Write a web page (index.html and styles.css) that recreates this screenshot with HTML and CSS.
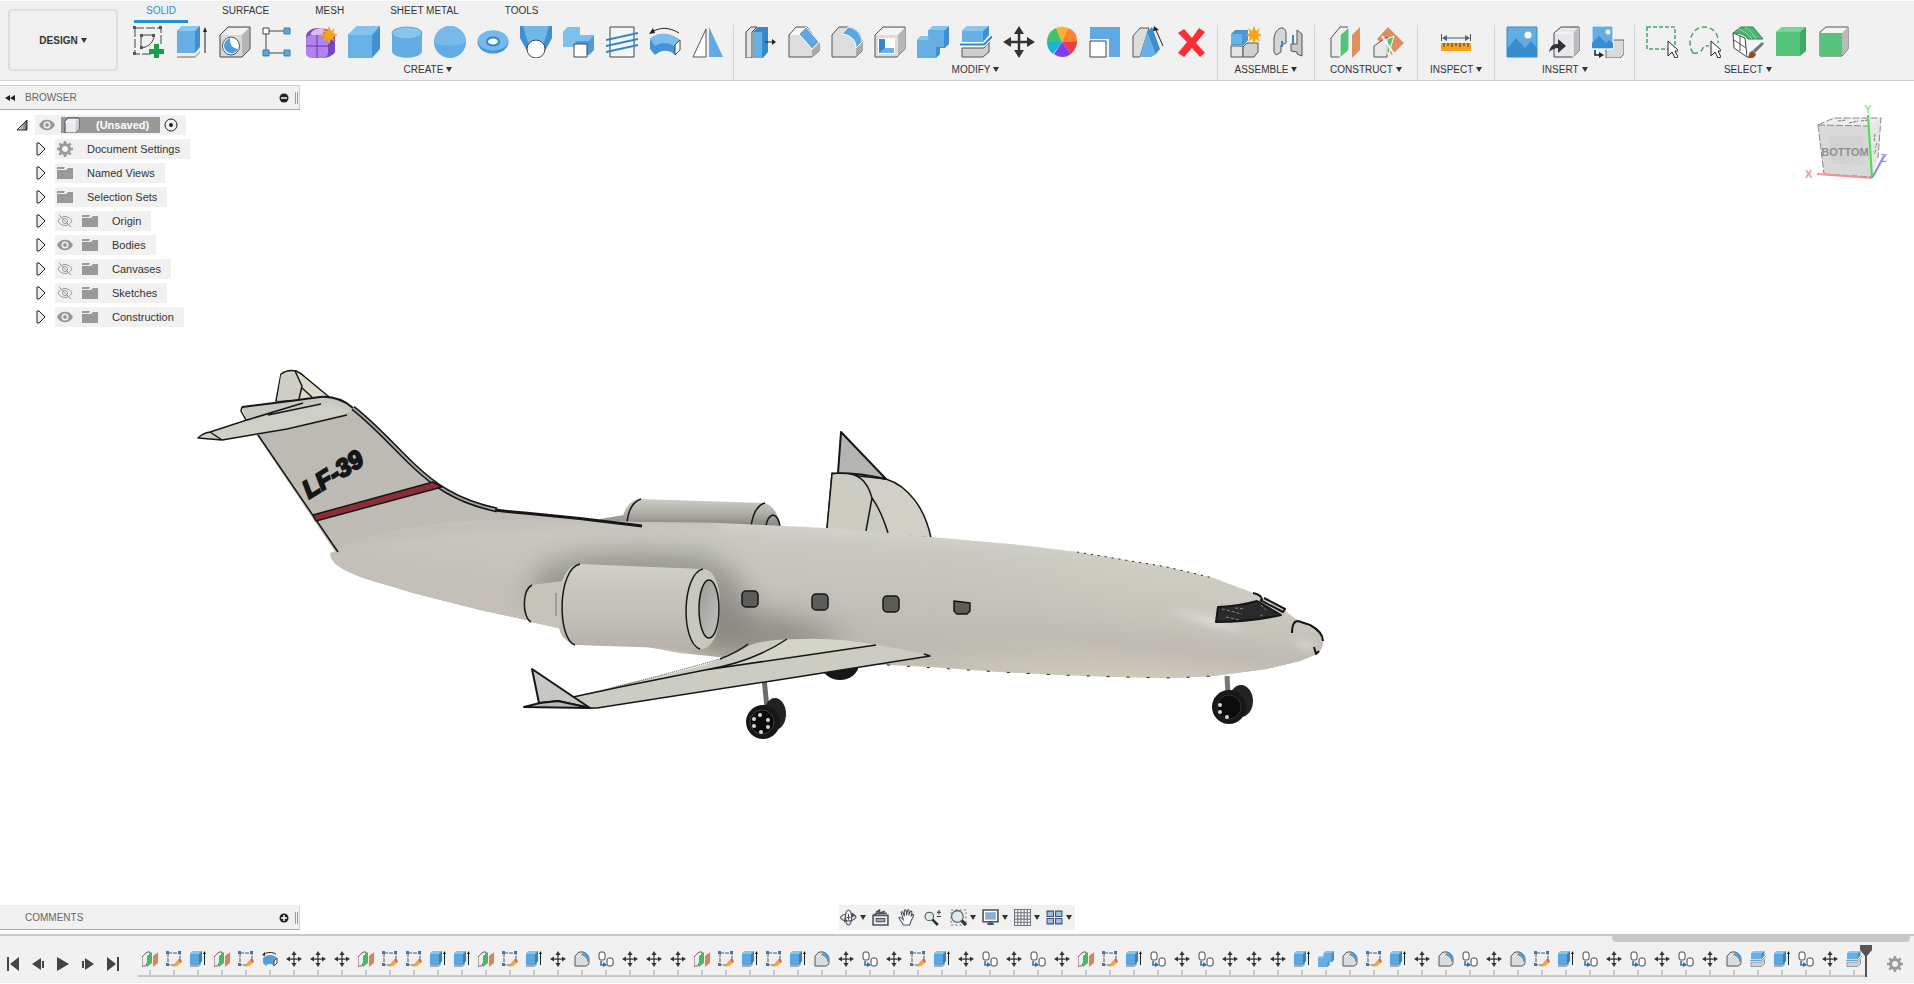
FILE: index.html
```html
<!DOCTYPE html>
<html lang="en">
<head>
<meta charset="UTF-8">
<meta name="viewport" content="width=device-width, initial-scale=1.0">
<title>Unsaved - Design</title>
<link rel="stylesheet" href="styles.css">
</head>
<body>
<!-- Icon sprite -->
<svg class="sprite" aria-hidden="true">
    <defs>
        <linearGradient id="caret-face" x1="0" y1="0" x2="1" y2="0"><stop offset="0" stop-color="#fff"/><stop offset="1" stop-color="#666"/></linearGradient>
    </defs>
    <!-- create -->
    <symbol id="i-sketch" viewBox="0 0 32 32"><path d="M2 2h26v17M2 2v26h16" fill="none" stroke="#444" stroke-dasharray="9 2"/><path d="M8 9h13M8 9v13M21 9c0 7-5 12-13 13" fill="none" stroke="#444"/><path d="M0 0h3v3H0zM26 0h3v3h-3zM0 26h3v3H0zM7 8h3v3H7zM19 8h3v3h-3zM7 20h3v3H7z" fill="#555"/><path d="M21 18h5v5h5v5h-5v5h-5v-5h-5v-5h5z" fill="#1d9d50"/></symbol>
    <symbol id="i-extrude" viewBox="0 0 32 32"><path d="M1 28l5-3h18v2l-5 5H1z" fill="#bba99c"/><path d="M1 26h18l5-4v3l-5 5H1z" fill="#eee"/><path d="M1 5l5-5h18v21l-5 6H1z" fill="#3f90d0"/><path d="M1 5h18v22H1z" fill="#67b0e6"/><path d="M1 5l5-5h18l-5 5z" fill="#8dc6ef"/><path d="M29 27V4" stroke="#222"/><path d="M27 6l2-5 2 5z" fill="#222"/></symbol>
    <symbol id="i-hole" viewBox="0 0 32 32"><path d="M1 9l8-8h22v22l-8 8H1z" fill="#d9d9d9" stroke="#444"/><path d="M2 9l8-7h20l-7 7z" fill="#f2f2f2"/><path d="M23 9l7-7v21l-7 7z" fill="#b5b5b5"/><ellipse cx="12" cy="20" rx="8.500" ry="9" fill="#fff" stroke="#555"/><path d="M11 12c0 7 2 10 8 11-2 6-13 6-14-3 0-4 3-7 6-8z" fill="#4c9edb"/></symbol>
    <symbol id="i-pattern" viewBox="0 0 32 32"><path d="M7 5h16M4 8v17M7 27h16" stroke="#444" fill="none"/><path d="M1 2h6v6H1z" fill="#fff" stroke="#444"/><path d="M22 2h6v6h-6zM1 24h6v6H1zM22 24h6v6h-6z" fill="#5aa8e2" stroke="#3d7cab"/></symbol>
    <symbol id="i-form" viewBox="0 0 32 32"><path d="M1 11c0-5 5-9 12-9s17 3 17 9v15c-3 5-9 6-15 6S1 32 1 26z" fill="#7647c4"/><path d="M1 13c0-4 4-4 11-4s11 0 11 4v13c0 6-4 6-11 6S1 32 1 26z" fill="#b283ec"/><path d="M5 8c4-6 10-6 15-6l-2 7H7z" fill="#d9bcf6"/><path d="M12 9v23M1 20h22c4-2 7-4 7-6" stroke="#633aa8" fill="none"/><path d="M24 0l2 5 4-3-2 5 5 2-5 2 2 5-4-3-2 6-2-6-5 3 3-5-6-2 6-2-3-5 5 3z" fill="#f5a417"/></symbol>
    <symbol id="i-box" viewBox="0 0 32 32"><path d="M0 9l9-9h23v23l-8 9H0z" fill="#4292d3"/><path d="M0 9h24v23H0z" fill="#67b1e7"/><path d="M0 9l9-9h23l-8 9z" fill="#86c2ee"/></symbol>
    <symbol id="i-cylinder" viewBox="0 0 32 32"><path d="M1 7v18c0 9 30 9 30 0V7z" fill="#63ade4"/><ellipse cx="16" cy="7" rx="15" ry="6" fill="#89c4ef" stroke="#5ba5de"/></symbol>
    <symbol id="i-sphere" viewBox="0 0 32 32"><circle cx="16" cy="16" r="16" fill="#60ace5"/><path d="M0 16a16 16 0 0132 0c-5 5-27 5-32 0z" fill="#78b9ea"/></symbol>
    <symbol id="i-torus" viewBox="0 0 32 32"><ellipse cx="16" cy="16" rx="15.500" ry="11.500" fill="#4898d7"/><ellipse cx="16" cy="14.500" rx="15" ry="10" fill="#77b9eb"/><ellipse cx="16" cy="15.500" rx="6" ry="4" fill="#fff" stroke="#3685c6" stroke-width="2"/></symbol>
    <symbol id="i-loft" viewBox="0 0 32 32"><path d="M0 0h32v12l-7 13H7L0 12z" fill="#3f8fd1"/><path d="M3 0h26l-6 20H9z" fill="#73b8ea"/><ellipse cx="16" cy="23" rx="9" ry="9" fill="#fff" stroke="#444"/></symbol>
    <symbol id="i-pipe" viewBox="0 0 32 32"><path d="M0 6l5-5h12v8h14v15l-5 5H11v-8H0z" fill="#4c9cdb"/><path d="M0 6l5-5h12v8h14l-5 6H13l-2 6H0z" fill="#7fbfed"/><path d="M11 18h13v13H11z" fill="#fff" stroke="#444"/></symbol>
    <symbol id="i-thread" viewBox="0 0 32 32"><path d="M4 1h24v30H4z" fill="#f5f5f5" stroke="#444"/><path d="M0 14l32-7M0 20l32-7M0 26l32-7" stroke="#2c87d2" stroke-width="2"/></symbol>
    <symbol id="i-bend" viewBox="0 0 32 32"><path d="M1 13c8-7 19-7 30 1v10l-5 5c-6-6-14-5-20 0l-5-6z" fill="#4594d4"/><path d="M1 13c8-7 19-7 30 1l-6 6c-6-4-13-4-19 0z" fill="#7dbdec"/><path d="M26 19l5-5v10l-5 5z" fill="#fff" stroke="#444"/><path d="M3 6c8-5 17-5 27 1" fill="none" stroke="#222"/><path d="M0 8l4-6 2 5z" fill="#222"/></symbol>
    <symbol id="i-mirror" viewBox="0 0 32 32"><path d="M1 31L14 3v28z" fill="#fff" stroke="#555"/><path d="M17 1l14 30H17z" fill="#60abe3"/></symbol>
    <!-- modify -->
    <symbol id="i-press" viewBox="0 0 32 32"><path d="M1 6l5-5h6l-5 5v26H1z" fill="#e5e5e5" stroke="#444"/><path d="M8 6l5-5h10v25l-5 6H8z" fill="#3787cb"/><path d="M8 6h9v26H8z" fill="#67b0e6"/><path d="M20 16h9" stroke="#222"/><path d="M27 13l4 3-4 3z" fill="#222"/></symbol>
    <symbol id="i-chamfer" viewBox="0 0 32 32"><path d="M1 9l7-8h11l12 16v8l-7 6H1z" fill="#ddd" stroke="#555"/><path d="M24 24l7-7v8l-7 6z" fill="#aaa"/><path d="M2 9l6-7h10l-7 7z" fill="#f8f8f8"/><path d="M11 8l7-7 13 15-7 7z" fill="#5aa7e1" stroke="#fff"/></symbol>
    <symbol id="i-fillet" viewBox="0 0 32 32"><path d="M1 9l7-8h9c9 1 14 8 14 16v8l-6 6H1z" fill="#ddd" stroke="#555"/><path d="M25 22l6-4v7l-6 6z" fill="#aaa"/><path d="M11 8l6-7c9 1 14 9 14 15l-6 6c0-8-5-13-14-14z" fill="#5aa7e1" stroke="#fff"/></symbol>
    <symbol id="i-shell" viewBox="0 0 32 32"><path d="M1 9l8-8h22v22l-8 8H1z" fill="#ddd" stroke="#555"/><path d="M2 9l8-7h20l-7 7z" fill="#f5f5f5"/><path d="M24 9l7-7v21l-7 7z" fill="#b5b5b5"/><path d="M4 12h17v16H4z" fill="#fff"/><path d="M5 13h6v9h9v5H5z" fill="#69b2e7"/><path d="M5 13h6v9l-6 5z" fill="#3586cb"/></symbol>
    <symbol id="i-combine" viewBox="0 0 32 32"><path d="M0 14l4-4h8V4l4-4h16v18l-4 4h-5v6l-4 4H0z" fill="#3f90d2"/><path d="M0 14h11V4h16v17h-8v11H0z" fill="#65afe5"/><path d="M0 14l4-4h8l-1 4zM12 4l4-4h16l-4 4z" fill="#8bc5ef"/></symbol>
    <symbol id="i-split" viewBox="0 0 32 32"><path d="M2 5l5-5h22v9l-6 7H2z" fill="#3f90d2"/><path d="M2 5l5-5h22l-6 5z" fill="#8dc7f0"/><path d="M2 5h21v11H2z" fill="#66b0e6"/><path d="M2 22h22l5-6v10l-6 5H2z" fill="#cfcfcf" stroke="#555"/><path d="M0 18.500h24l8-8" fill="none" stroke="#fff" stroke-width="4"/><path d="M0 18.500h24l8-8" fill="none" stroke="#2c87d2" stroke-width="2"/></symbol>
    <symbol id="i-move" viewBox="0 0 32 32"><path d="M16 5v22M5 16h22" stroke="#333" stroke-width="2.500"/><path d="M11 8l5-8 5 8zM11 24l5 8 5-8zM8 11l-8 5 8 5zM24 11l8 5-8 5z" fill="#333"/></symbol>
    <symbol id="i-colors" viewBox="0 0 32 32"><path d="M16 16L10 2a15 15 0 0112 0z" fill="#ffb02e"/><path d="M16 16l6-14c6 2 9 7 9 13z" fill="#ff8134"/><path d="M16 16l15-1c0 6-3 10-6 13z" fill="#ee3d48"/><path d="M16 16l9 12c-5 4-12 4-17 0z" fill="#7b3ff2"/><path d="M16 16L7 28c-4-3-6-8-6-12z" fill="#1ab1d8"/><path d="M16 16H1C1 9 5 4 10 2z" fill="#3cc66b"/></symbol>
    <symbol id="i-scale" viewBox="0 0 32 32"><path d="M1 1h30v30H20V13H1z" fill="#5faae3"/><path d="M1 15h16v16H1z" fill="#fff" stroke="#444"/></symbol>
    <symbol id="i-draft" viewBox="0 0 32 32"><path d="M1 10l7-8h9L8 31H1z" fill="#ddd" stroke="#555"/><path d="M15 6l5-5 8 22-5 6z" fill="#3d8ccd"/><path d="M15 6l9 22-5 3H8z" fill="#67b0e6"/><path d="M31 20L24 4" stroke="#222"/><path d="M21 5l1-5 5 4z" fill="#222"/></symbol>
    <symbol id="i-delete" viewBox="0 0 32 32"><path d="M3 7l6-4 8 9 7-10 6 4-9 11 9 10-5 4-8-9-8 9-6-4 9-11z" fill="#fa2e36"/></symbol>
    <!-- assemble, construct, inspect, insert -->
    <symbol id="i-component" viewBox="0 0 32 32"><path d="M2 8l4-4h13v10l-4 5H2z" fill="#4797d8"/><path d="M2 8h11v10H2z" fill="#69b2e7"/><path d="M2 20h12v11H2z" fill="#e5e5e5" stroke="#555"/><path d="M14 21l4-4h11v9l-4 5H14z" fill="#d0d0d0" stroke="#555"/><path d="M25 0l2 5 4-3-2 5 4 2-4 2 2 5-4-3-2 5-2-5-4 3 2-5-4-2 4-2-2-5 4 3z" fill="#f5a417"/></symbol>
    <symbol id="i-joint" viewBox="0 0 32 32"><path d="M2 26V12c1-6 4-10 8-10 3 0 4 3 4 6v9l-5 2v7l-5 3z" fill="#d6d6d6" stroke="#555"/><path d="M30 30V8l-5-4v14h-6v7l6 1v2z" fill="#c8c8c8" stroke="#555"/><path d="M10 15v6M21 9v9" stroke="#3787cb" stroke-width="2"/></symbol>
    <symbol id="i-plane" viewBox="0 0 32 32"><path d="M2 12L11 1h8v9l-8 21H2z" fill="#ececec" stroke="#555"/><path d="M11 9l9-8v23l-9 8z" fill="#55c37a" stroke="#fff"/><path d="M23 9l8-8v23l-8 8z" fill="#dd8f5c"/></symbol>
    <symbol id="i-plane-angle" viewBox="0 0 32 32"><path d="M16 1l16 16-12 12L5 13z" fill="#dd8f5c"/><path d="M2 20l13-9v20H2z" fill="#e9e9e9" stroke="#555"/><path d="M15 28V13l7-3-5 17z" fill="#55c37a" stroke="#fff"/><path d="M10 10l12 18" stroke="#fff" stroke-width="2"/></symbol>
    <symbol id="i-measure" viewBox="0 0 32 32"><path d="M1 17h30v8H1z" fill="#f8a21a"/><path d="M4 17v4M8 17v3M12 17v4M16 17v3M20 17v4M24 17v3M28 17v4" stroke="#333"/><path d="M1.500 8v7M30.500 8v7M3 12h26" stroke="#555" fill="none"/><path d="M2 12l5-3v6zM30 12l-5-3v6z" fill="#4d6885"/></symbol>
    <symbol id="i-image" viewBox="0 0 32 32"><path d="M1 1h30v30H1z" fill="#62ade4"/><path d="M1 23L10 12l9 10 6-7 6 7v9H1z" fill="#388dcc"/><circle cx="22" cy="9" r="3.500" fill="#fffbe2"/><path d="M1 1h30v30H1z" fill="none" stroke="#388dcc"/></symbol>
    <symbol id="i-derive" viewBox="0 0 32 32"><path d="M5 7l7-6h18v24l-6 6H5z" fill="#e7e7ed" stroke="#444"/><path d="M24 7l6-6v24l-6 6z" fill="#bababf"/><path d="M6 7h18M24 7v24" stroke="#fff"/><path d="M0 26c2-8 5-8 9-8v-5l8 7-8 7v-5c-3 0-5 1-9 4z" fill="#333"/></symbol>
    <symbol id="i-decal" viewBox="0 0 32 32"><path d="M14 18l4-4h14v14l-4 4H14z" fill="#dadade" stroke="#666"/><path d="M0 0h21v23H0z" fill="#62ade4" stroke="#fff"/><path d="M0 17l7-7 7 7 3-3 4 3v5H0z" fill="#388dcc"/><circle cx="16" cy="6" r="2.500" fill="#fffbe2"/><path d="M3 24v5h5" fill="none" stroke="#222" stroke-width="1.500"/><path d="M7 26l5 3-5 3z" fill="#222"/></symbol>
    <!-- select -->
    <symbol id="i-window" viewBox="0 0 32 32"><path d="M1 1h28v22H1z" fill="none" stroke="#43a667" stroke-dasharray="4 2" stroke-width="1.500"/><path d="M22 15v15l4-4 3 6 3-1-3-6h4z" fill="#fff" stroke="#222"/></symbol>
    <symbol id="i-lasso" viewBox="0 0 32 32"><path d="M4 27C-3 17 3 1 15 1c9 0 15 7 14 16M4 27c6 1 9-2 10-5s4-2 6-2" fill="none" stroke="#43a667" stroke-dasharray="5 3" stroke-width="1.500"/><path d="M22 15v15l4-4 3 6 3-1-3-6h4z" fill="#fff" stroke="#222"/></symbol>
    <symbol id="i-paint" viewBox="0 0 32 32"><path d="M1 7l12 5 2 19L2 22z" fill="#fff" stroke="#444"/><path d="M1 7l8-6h12l10 12H16c-3-5-9-6-15-6z" fill="#4cb571" stroke="#338252"/><path d="M6 3c7 2 11 6 14 10M13 1c5 3 9 8 11 12" stroke="#8fdaa9" fill="none"/><path d="M15 14h14v4l-12 12h-2z" fill="#f4f4f4"/><path d="M2 14l12 8M8 10v15" stroke="#555" fill="none"/><path d="M30 16l2 2-9 9-3-2z" fill="#777"/><path d="M15 32c2-1 1-5 5-7l4 3c-1 4-5 5-9 4z" fill="#8f4f1e"/></symbol>
    <symbol id="i-body" viewBox="0 0 32 32"><path d="M1 6l6-5h24v24l-6 5H1z" fill="#3eab63"/><path d="M1 6h24v24H1z" fill="#56c47b"/><path d="M1 6l6-5h24l-6 5z" fill="#77d396"/></symbol>
    <symbol id="i-face" viewBox="0 0 32 32"><path d="M2 6l6-5h22v22l-6 7H2z" fill="#f4f4f4" stroke="#555"/><path d="M24 7l6-6v22l-6 6z" fill="#bbb"/><path d="M2 7h22v23H2z" fill="#56c47b"/></symbol>
    <!-- browser tree -->
    <symbol id="i-eye" viewBox="0 0 16 16"><path d="M0 8c3-7 13-7 16 0-3 7-13 7-16 0z" fill="#999"/><circle cx="8" cy="8" r="3.500" fill="#f2f2f2"/><circle cx="8" cy="8" r="2" fill="#999"/></symbol>
    <symbol id="i-eye-off" viewBox="0 0 16 16"><path d="M1 8c3-6 11-6 14 0-3 6-11 6-14 0zM2 2l12 12" fill="none" stroke="#999"/><circle cx="8" cy="8" r="2.500" fill="none" stroke="#999"/></symbol>
    <symbol id="i-folder" viewBox="0 0 16 16"><path d="M0 2h8l-1 2H0zM0 5h9l2-2h5v11H0z" fill="#999"/></symbol>
    <symbol id="i-gear" viewBox="0 0 16 16"><circle cx="8" cy="8" r="4.500" fill="none" stroke="#999" stroke-width="3"/><path d="M8 0v3M8 13v3M0 8h3M13 8h3M2.300 2.300l2 2M11.700 11.700l2 2M2.300 13.700l2-2M11.700 4.300l2-2" stroke="#999" stroke-width="2.500"/></symbol>
    <symbol id="i-cube" viewBox="0 0 16 16"><path d="M1 4l3-3h11v11l-4 4H1z" fill="#e8eaf0" stroke="#444"/><path d="M11 5l4-4v11l-4 4z" fill="#c9cbd6"/><path d="M1 5h10v10" fill="none" stroke="#fff"/></symbol>
    <symbol id="i-closed" viewBox="0 0 10 14"><path d="M1 1h2l6 6-6 6H1z" fill="#eee" stroke="#222"/></symbol>
    <symbol id="i-open" viewBox="0 0 12 12"><path d="M11 1v10H1z" fill="url(#caret-face)" stroke="#222"/></symbol>
    <symbol id="i-radio" viewBox="0 0 14 14"><circle cx="7" cy="7" r="6" fill="none" stroke="#222"/><circle cx="7" cy="7" r="2" fill="#222"/></symbol>
    <!-- navigation bar -->
    <symbol id="i-orbit" viewBox="0 0 16 16"><ellipse cx="8" cy="8" rx="3" ry="7" fill="none" stroke="#49525c"/><path d="M5 5C1 6 0 8 1 9c2 3 10 3 13 0 2-1 1-3-3-4M8 5v5M6 8h4" fill="none" stroke="#49525c"/><path d="M4 8l3 3-3 2zM11 3l4 3-4 2z" fill="#49525c"/></symbol>
    <symbol id="i-look" viewBox="0 0 16 16"><path d="M1 6h14v9H1zM2 6l3-3M4 4h10M4 3l3-2v3l5-2" fill="none" stroke="#49525c" stroke-width="1.500"/><path d="M4 9h8v3H4z" fill="#aaa" stroke="#49525c"/></symbol>
    <symbol id="i-pan" viewBox="0 0 16 16"><path d="M5 15C4 12 1 10 1 8c1-1 2 0 4 2L3 3c1-1 2 0 3 4L6 1c1-1 2 0 2 5l1-5c1-1 2 0 1 5l2-4c1 0 2 0 0 5l2-2c2 0-1 4-2 7l-1 3z" fill="#fff" stroke="#49525c"/></symbol>
    <symbol id="i-zoom" viewBox="0 0 16 16"><circle cx="5" cy="7" r="4" fill="#dceaec" stroke="#49525c"/><path d="M8 10l5 5" stroke="#333" stroke-width="2.500"/><path d="M12 3h4M14 1v4M12 7h4" stroke="#333"/></symbol>
    <symbol id="i-fit" viewBox="0 0 16 16"><path d="M1 1h14v14H1z" fill="none" stroke="#777" stroke-dasharray="2 2"/><circle cx="7" cy="7" r="5.500" fill="#dceaec" stroke="#49525c"/><path d="M11 11l4 4" stroke="#333" stroke-width="3"/></symbol>
    <symbol id="i-display" viewBox="0 0 16 16"><path d="M1 1h14v11H1z" fill="#fff" stroke="#49525c" stroke-width="1.500"/><path d="M3 3h10v7H3z" fill="#89ace0"/><path d="M5 14h6M8 12v2" stroke="#49525c" stroke-width="2"/></symbol>
    <symbol id="i-grid" viewBox="0 0 16 16"><path d="M.500.500h15v15H.500zM3.500 0v16M6.500 0v16M9.500 0v16M12.500 0v16M0 3.500h16M0 6.500h16M0 9.500h16M0 12.500h16" fill="#fff" stroke="#6d737a"/></symbol>
    <symbol id="i-views" viewBox="0 0 16 16"><path d="M1 2h6v5H1zM9 2h6v5H9zM1 9h6v5H1zM9 9h6v5H9z" fill="#9cbdea" stroke="#3f5270"/></symbol>
    <!-- timeline -->
    <symbol id="t-plane" viewBox="0 0 16 16"><path d="M0 6l5-5h3v4L4 15H0z" fill="#eee" stroke="#666"/><path d="M5 5l5-4v11l-5 4z" fill="#42b96c"/><path d="M11 5l5-4v11l-5 4z" fill="#e08352"/></symbol>
    <symbol id="t-sketch" viewBox="0 0 16 16"><path d="M2 2h12v7M2 2v12h7" fill="none" stroke="#555" stroke-dasharray="4 1"/><path d="M0 0h3v3H0zM12 0h3v3h-3zM0 12h3v3H0z" fill="#3b78ad"/><path d="M8 13l4-4 3 3-4 3-4 1z" fill="#f6a33c"/><path d="M13 8l3 2-1 2-3-3z" fill="#e4572e"/></symbol>
    <symbol id="t-extrude" viewBox="0 0 16 16"><path d="M0 14h8l3-2v2l-3 2H0z" fill="#b5aaa0"/><path d="M0 3l3-3h9v10l-3 4H0z" fill="#327fc3"/><path d="M0 3h9v11H0z" fill="#58a6e2"/><path d="M0 3l3-3h9L9 3z" fill="#86c2ee"/><path d="M14.500 14V2" stroke="#222"/><path d="M13 3l1.500-3L16 3z" fill="#222"/></symbol>
    <symbol id="t-sweep" viewBox="0 0 16 16"><path d="M1 7c4-4 10-4 14 0v5l-3 3c-2-3-6-3-8 0l-3-3z" fill="#4f9fdd"/><path d="M12 10l3-3v5l-3 3z" fill="#fff" stroke="#444"/><path d="M2 3c4-2 8-2 12 0" fill="none" stroke="#222"/><path d="M0 4l3-3v4z" fill="#222"/></symbol>
    <symbol id="t-fillet" viewBox="0 0 16 16"><path d="M1 5l4-4h4c4 1 6 4 6 8v4l-3 2H1z" fill="#ddd" stroke="#555"/><path d="M7 4l3-3c4 1 5 5 5 8l-2 2c0-4-2-6-6-7z" fill="#4b9cdb"/></symbol>
    <symbol id="t-copy" viewBox="0 0 16 16"><rect x="1" y="1" width="6" height="8" rx="2" fill="#fff" stroke="#444"/><rect x="9" y="7" width="6" height="8" rx="2" fill="#fff" stroke="#444"/><path d="M3 10v4h3" fill="none" stroke="#2470b8" stroke-width="1.500"/><path d="M5 11l4 3-4 2z" fill="#2470b8"/></symbol>
</svg>

<div class="app">
    <!-- Toolbar -->
    <header class="toolbar">
        <button class="workspace" type="button">DESIGN <span class="arrow"></span></button>
        <div class="ribbon">
            <nav class="tabs">
                <a href="#" class="tab active">SOLID</a>
                <a href="#" class="tab">SURFACE</a>
                <a href="#" class="tab">MESH</a>
                <a href="#" class="tab">SHEET METAL</a>
                <a href="#" class="tab">TOOLS</a>
            </nav>
            <div class="groups">
                <div class="group">
                    <div class="tools">
                        <button type="button" aria-label="Create Sketch"><svg><use href="#i-sketch"/></svg></button>
                        <button type="button" aria-label="Extrude"><svg><use href="#i-extrude"/></svg></button>
                        <button type="button" aria-label="Hole"><svg><use href="#i-hole"/></svg></button>
                        <button type="button" aria-label="Pattern"><svg><use href="#i-pattern"/></svg></button>
                        <button type="button" aria-label="Create Form"><svg><use href="#i-form"/></svg></button>
                        <button type="button" aria-label="Box"><svg><use href="#i-box"/></svg></button>
                        <button type="button" aria-label="Cylinder"><svg><use href="#i-cylinder"/></svg></button>
                        <button type="button" aria-label="Sphere"><svg><use href="#i-sphere"/></svg></button>
                        <button type="button" aria-label="Torus"><svg><use href="#i-torus"/></svg></button>
                        <button type="button" aria-label="Loft"><svg><use href="#i-loft"/></svg></button>
                        <button type="button" aria-label="Pipe"><svg><use href="#i-pipe"/></svg></button>
                        <button type="button" aria-label="Thread"><svg><use href="#i-thread"/></svg></button>
                        <button type="button" aria-label="Sweep"><svg><use href="#i-bend"/></svg></button>
                        <button type="button" aria-label="Mirror"><svg><use href="#i-mirror"/></svg></button>
                    </div>
                    <button class="group-name" type="button">CREATE <span class="arrow"></span></button>
                </div>
                <div class="group">
                    <div class="tools">
                        <button type="button" aria-label="Press Pull"><svg><use href="#i-press"/></svg></button>
                        <button type="button" aria-label="Chamfer"><svg><use href="#i-chamfer"/></svg></button>
                        <button type="button" aria-label="Fillet"><svg><use href="#i-fillet"/></svg></button>
                        <button type="button" aria-label="Shell"><svg><use href="#i-shell"/></svg></button>
                        <button type="button" aria-label="Combine"><svg><use href="#i-combine"/></svg></button>
                        <button type="button" aria-label="Split Body"><svg><use href="#i-split"/></svg></button>
                        <button type="button" aria-label="Move"><svg><use href="#i-move"/></svg></button>
                        <button type="button" aria-label="Appearance"><svg><use href="#i-colors"/></svg></button>
                        <button type="button" aria-label="Scale"><svg><use href="#i-scale"/></svg></button>
                        <button type="button" aria-label="Draft"><svg><use href="#i-draft"/></svg></button>
                        <button type="button" aria-label="Delete"><svg><use href="#i-delete"/></svg></button>
                    </div>
                    <button class="group-name" type="button">MODIFY <span class="arrow"></span></button>
                </div>
                <div class="group">
                    <div class="tools">
                        <button type="button" aria-label="New Component"><svg><use href="#i-component"/></svg></button>
                        <button type="button" aria-label="Joint"><svg><use href="#i-joint"/></svg></button>
                    </div>
                    <button class="group-name" type="button">ASSEMBLE <span class="arrow"></span></button>
                </div>
                <div class="group wide">
                    <div class="tools">
                        <button type="button" aria-label="Offset Plane"><svg><use href="#i-plane"/></svg></button>
                        <button type="button" aria-label="Plane at Angle"><svg><use href="#i-plane-angle"/></svg></button>
                    </div>
                    <button class="group-name" type="button">CONSTRUCT <span class="arrow"></span></button>
                </div>
                <div class="group">
                    <div class="tools">
                        <button type="button" aria-label="Measure"><svg><use href="#i-measure"/></svg></button>
                    </div>
                    <button class="group-name inspect" type="button">INSPECT <span class="arrow"></span></button>
                </div>
                <div class="group">
                    <div class="tools">
                        <button type="button" aria-label="Canvas"><svg><use href="#i-image"/></svg></button>
                        <button type="button" aria-label="Derive"><svg><use href="#i-derive"/></svg></button>
                        <button type="button" aria-label="Decal"><svg><use href="#i-decal"/></svg></button>
                    </div>
                    <button class="group-name" type="button">INSERT <span class="arrow"></span></button>
                </div>
                <div class="group">
                    <div class="tools">
                        <button type="button" aria-label="Window Selection"><svg><use href="#i-window"/></svg></button>
                        <button type="button" aria-label="Freeform Selection"><svg><use href="#i-lasso"/></svg></button>
                        <button type="button" aria-label="Paint Selection"><svg><use href="#i-paint"/></svg></button>
                        <button type="button" aria-label="Select Body"><svg><use href="#i-body"/></svg></button>
                        <button type="button" aria-label="Select Face"><svg><use href="#i-face"/></svg></button>
                    </div>
                    <button class="group-name" type="button">SELECT <span class="arrow"></span></button>
                </div>
            </div>
        </div>
    </header>

    <!-- Canvas -->
    <main class="canvas">
        <svg class="model" viewBox="0 81 1914 853" role="img" aria-label="Jet model">
            <defs>
                <linearGradient id="hull" gradientUnits="userSpaceOnUse" x1="800" y1="524" x2="790" y2="672">
                    <stop offset="0" stop-color="#d4d3c9"/><stop offset=".12" stop-color="#c9c9c1"/><stop offset=".4" stop-color="#c5c3bc"/><stop offset=".75" stop-color="#bdb9b2"/><stop offset=".92" stop-color="#c4c0b4"/><stop offset="1" stop-color="#dad6c5"/>
                </linearGradient>
                <linearGradient id="nose" gradientUnits="userSpaceOnUse" x1="1130" y1="555" x2="1115" y2="680">
                    <stop offset="0" stop-color="#d0cfc4"/><stop offset=".4" stop-color="#c8c6bc"/><stop offset=".7" stop-color="#bfbab3"/><stop offset="1" stop-color="#d2cebc"/>
                </linearGradient>
                <linearGradient id="nose-fade" x1="0" y1="0" x2="1" y2="0"><stop offset="0" stop-color="#000"/><stop offset=".5" stop-color="#fff"/></linearGradient>
                <mask id="nose-mask"><rect x="930" y="500" width="420" height="200" fill="url(#nose-fade)"/></mask>
                <linearGradient id="fin" x1="0" y1="0" x2="1" y2="1"><stop offset="0" stop-color="#bcbbb5"/><stop offset=".5" stop-color="#bebab4"/><stop offset="1" stop-color="#c1beb7"/></linearGradient>
                <linearGradient id="engine" x1="0" y1="0" x2="0" y2="1"><stop offset="0" stop-color="#d2d1c7"/><stop offset=".3" stop-color="#c8c7bf"/><stop offset=".75" stop-color="#bebbb4"/><stop offset="1" stop-color="#b6b1a9"/></linearGradient>
                <linearGradient id="engine-far" x1="0" y1="0" x2="0" y2="1"><stop offset="0" stop-color="#cdccc3"/><stop offset=".5" stop-color="#b1b0aa"/><stop offset="1" stop-color="#85847f"/></linearGradient>
                <linearGradient id="intake" x1="0" y1="0" x2="1" y2="1"><stop offset="0" stop-color="#9b9b96"/><stop offset="1" stop-color="#c4c3bd"/></linearGradient>
                <filter id="soft" x="-50%" y="-80%" width="200%" height="260%"><feGaussianBlur stdDeviation="13"/></filter>
                <filter id="soft-small" x="-50%" y="-80%" width="200%" height="260%"><feGaussianBlur stdDeviation="4"/></filter>
                <path id="hull-shape" d="M338 551C346 541 380 532 430 525C500 516 590 521 642 522L720 523L827 528L931 537L1020 545L1077 552L1167 567L1213 578L1253 593L1285 611L1297 620L1318 631C1325 639 1324 648 1317 654L1300 661L1267 669L1213 676L1173 678L1120 677L1060 675L1000 672L930 667L887 665L760 662L710 656L680 653L653 648L563 628L480 610L413 593L363 578C345 571 330 564 330 553Z"/>
                <path id="fin-edge" d="M353 408C376 426 393 446 413 465C433 484 455 501 497 510"/>
                <clipPath id="hull-clip"><use href="#hull-shape"/></clipPath>
            </defs>

            <!-- far side: landing gear, wing, engine -->
            <ellipse cx="840" cy="664" rx="19" ry="16" fill="#161616"/>
            <path class="edge" fill="#d2d0c6" d="M827 530L832 473L886 479C908 486 925 508 931 538Z"/>
            <path fill="#cdccc2" d="M840 473C858 473 868 483 872 498L888 532L827 530L832 473Z"/>
            <path class="edge" fill="none" d="M827 528L832 474L838 473C858 472 867 480 872 498M872 498C877 505 884 520 888 533M872 498L866 531M874 477L886 479"/>
            <path class="edge thick" fill="#b5b4b1" d="M838 473L841 432L886 479Q860 473 838 473Z"/>
            <path d="M600 519L624 515L640 524H600Z" fill="#9c9b95"/>
            <path d="M621 524C624 507 631 499 641 499L765 503C774 506 779 516 780 526Z" fill="url(#engine-far)"/>
            <path class="edge" fill="none" d="M641 499C632 502 628 512 627 523M765 503C757 505 753 513 751 526M766 526C767 519 769 516 773 515C777 516 779 520 780 526"/>

            <!-- tail -->
            <path class="edge" fill="#dddaca" d="M276 401L281 374Q288 369 296 371Q301 373 305 377L334 401Z"/>
            <path fill="#cfcec4" d="M277 401L281 375L294 372L302 386L299 399Z"/>
            <path class="edge" fill="none" d="M295 371L302 386L299 399M302 388L312 397"/>
            <path fill="url(#fin)" d="M242 407L290 401L320 397C334 396 345 401 353 408C376 426 393 446 413 465C433 484 455 501 497 510L547 514L642 526L560 545L338 556L246 419Z"/>
            <path fill="#c8c8c0" d="M242 407L320 398Q345 400 353 410L340 416L246 419Z"/>

            <!-- hull -->
            <use href="#hull-shape" fill="url(#hull)"/>
            <g clip-path="url(#hull-clip)">
                <path d="M320 570V535L560 605L720 665H540Z" fill="#c4c0b8" filter="url(#soft)"/>
                <rect x="930" y="500" width="420" height="200" fill="url(#nose)" mask="url(#nose-mask)"/>
                <path d="M540 570Q590 545 710 557L745 585L745 630L700 640L530 600Z" fill="#77776f" opacity=".6" filter="url(#soft)"/>
                <path d="M690 650L730 610Q790 610 850 640L760 665Z" fill="#77746e" opacity=".6" filter="url(#soft)"/>
                <path d="M330 545Q450 520 642 520L720 521" fill="none" stroke="#c2beb7" stroke-width="12" filter="url(#soft-small)"/>
                <path d="M1165 609L1218 620L1250 632L1210 624Z" fill="#fff" opacity=".7" filter="url(#soft-small)"/>
                <path d="M1290 640L1315 645L1310 650Z" fill="#fff" opacity=".6" filter="url(#soft-small)"/>
            </g>
            <path d="M1077 552L1167 567L1213 578" fill="none" stroke="#222" stroke-dasharray="2 5"/>
            <path d="M887 665L1000 672L1060 675L1120 677L1173 678L1213 676" fill="none" stroke="#222" stroke-dasharray="3 17"/>

            <!-- fin edges and markings -->
            <path class="edge" fill="none" d="M258 435L338 552M242 407L241 411L246 420"/>
            <path class="edge thick" fill="none" d="M242 407L290 401L320 397C334 396 345 401 353 408"/>
            <use href="#fin-edge" fill="none" stroke="#161616" stroke-width="5"/>
            <use href="#fin-edge" fill="none" stroke="#a5a49e" stroke-width="2"/>
            <path fill="none" stroke="#161616" stroke-width="3" d="M495 510C515 513 550 514 642 526"/>
            <path class="edge" fill="#8b2f33" d="M313 515L433 482L442 487L316 521Z"/>
            <text class="tail-number" transform="translate(309 499) rotate(-32)">LF-39</text>
            <path fill="#d0cfc5" d="M198 438L210 432L280 412L330 403L350 412L287 429L222 440Z"/>
            <path class="edge" fill="none" d="M347 415L287 429L222 440L198 438Q203 433 210 432L247 420L303 403M268 415L321 404M210 432L222 440"/>

            <!-- near engine -->
            <path fill="#c6c3bb" d="M532 585L562 581V629L530 622C522 612 522 595 532 585Z"/>
            <path fill="url(#engine)" d="M562 581C566 572 570 564 580 564L702 569C714 569 720 585 720 606C720 632 713 649 699 649L575 645C563 640 560 634 559 627Z"/>
            <path fill="#c9c8bf" d="M703 569C714 569 720 585 720 606C720 632 713 649 700 649C690 645 686 625 686 607C686 589 692 572 703 569Z"/>
            <ellipse class="edge" cx="709" cy="609" rx="10" ry="29" fill="url(#intake)"/>
            <path class="edge" fill="none" d="M532 585C522 590 522 617 531 622M580 564C557 569 557 639 575 645M703 569C682 573 680 642 700 649"/>
            <path d="M556 593V616" stroke="#777" fill="none"/>

            <!-- windows -->
            <g class="edge" fill="#5c5d56">
                <rect x="742" y="591" width="16" height="16" rx="4"/>
                <rect x="812" y="594" width="16" height="16" rx="4"/>
                <rect x="883" y="596" width="16" height="16" rx="4"/>
                <path d="M954 601L970 603V611L967 614H957L954 611Z"/>
            </g>

            <!-- near landing gear -->
            <path d="M764 678L767 708" stroke="#6c6d6a" stroke-width="5"/>
            <ellipse cx="775" cy="714" rx="11" ry="16" fill="#222"/>
            <circle cx="763" cy="722" r="17" fill="#171717"/>
            <circle cx="762" cy="722" r="12" fill="#0b0b0b" stroke="#3b3b3b"/>
            <g fill="#d5d5d2"><circle cx="760" cy="715" r="2"/><circle cx="768" cy="720" r="2"/><circle cx="768" cy="727" r="2"/><circle cx="761" cy="732" r="2"/><circle cx="754" cy="726" r="2"/><circle cx="754" cy="719" r="2"/></g>

            <!-- near wing -->
            <path fill="#cdccc2" d="M573 697L620 685C680 672 725 662 750 645Q775 637 810 640Q870 640 930 656L797 677L597 708H565Z"/>
            <path fill="#d5d4c8" d="M705 670C740 664 765 654 787 640Q830 636 876 645Z"/>
            <path class="edge" fill="none" d="M585 708H597L797 677L930 656L924 654M573 697L620 687L705 670L876 645M705 670C740 664 765 654 787 639M720 659Q738 652 748 644"/>
            <path d="M612 688Q690 668 720 659" fill="none" stroke="#333" stroke-dasharray="1 1"/>
            <path class="edge thick" fill="#c8c7c3" d="M539 703L532 669L590 708L558 701Z"/>
            <path class="edge thick" fill="#b9b8b1" d="M524 707L540 703L558 701L590 708Z"/>

            <!-- cockpit and nose -->
            <path class="edge thick" fill="#292a29" d="M1218 607Q1240 606 1257 601L1281 615Q1250 622 1216 622Z"/>
            <path d="M1222 609l20 5M1226 617l14 3M1235 608l10 1M1261 605l5 5M1260 616l4-2" stroke="#888" stroke-dasharray="3 2" fill="none"/>
            <path class="edge thick" fill="none" d="M1253 593Q1262 595 1262 600M1260 600L1283 612L1285 609L1264 598M1292 633Q1292 621 1298 621L1310 625Q1323 632 1323 641M1314 647L1316 654L1319 651"/>

            <!-- nose gear -->
            <path d="M1227 676L1228 694" stroke="#777873" stroke-width="5"/>
            <ellipse cx="1241" cy="701" rx="12" ry="16" fill="#222"/>
            <circle cx="1229" cy="707" r="17" fill="#171717"/>
            <circle cx="1229" cy="707" r="12" fill="#0b0b0b" stroke="#333"/>
            <g fill="#d5d5d2"><circle cx="1220" cy="705" r="2"/><circle cx="1220" cy="712" r="2"/><circle cx="1227" cy="717" r="2"/></g>
        </svg>

        <!-- View cube -->
        <svg class="view-cube" viewBox="0 0 110 100" role="img" aria-label="View cube">
            <path d="M23 35L39 28H86L73 36Z" fill="#eee"/>
            <path d="M73 36L86 28L83 68L77 87Z" fill="#e6e6e6"/>
            <path d="M23 35L73 36L77 87L29 84Z" fill="#d9d9d9"/>
            <path d="M33 46L68 46L70 75L37 74Z" fill="#d2d2d2"/>
            <path d="M23 35L73 36M23 35L29 84M23 35L39 28H86L83 68M29 84L77 87" fill="none" stroke="#888" stroke-dasharray="7 2"/>
            <path d="M43 31l8-1M54 33l9-2M66 31l7-1M80 44l-1 8M82 53l-2 5M81 60l-2 4" stroke="#777" stroke-dasharray="3 1" fill="none"/>
            <text x="50" y="66" class="face-name">BOTTOM</text>
            <path d="M22 84L77 88" stroke="#f79292" stroke-width="2"/>
            <path d="M77 88L89 66" stroke="#8482ee" stroke-width="2"/>
            <path d="M73 25L77 88" stroke="#4be04b" stroke-width="2"/>
            <text x="10" y="88" class="axis axis-x">X</text>
            <text x="69" y="23" class="axis axis-y">Y</text>
            <text x="85" y="72" class="axis axis-z">Z</text>
        </svg>

        <!-- Browser panel -->
        <section class="browser">
            <div class="panel-head">
                <span class="collapse"><svg viewBox="0 0 10 6"><path d="M5 0v6L0 3zM10 0v6L5 3z" fill="#222"/></svg></span>
                <span class="panel-title">BROWSER</span>
                <button class="round" type="button" aria-label="Hide browser"><svg viewBox="0 0 10 10"><circle cx="5" cy="5" r="4.500" fill="#222"/><path d="M2 5h6" stroke="#fff" stroke-width="1.500"/></svg></button>
                <span class="grip"></span>
            </div>
            <ul class="tree">
                <li class="root">
                    <svg class="twist"><use href="#i-open"/></svg>
                    <div class="node">
                        <svg><use href="#i-eye"/></svg>
                        <span class="selected"><svg><use href="#i-cube"/></svg>(Unsaved)</span>
                        <svg class="activate"><use href="#i-radio"/></svg>
                    </div>
                </li>
                <li><svg class="twist"><use href="#i-closed"/></svg><div class="node"><svg><use href="#i-gear"/></svg><span>Document Settings</span></div></li>
                <li><svg class="twist"><use href="#i-closed"/></svg><div class="node"><svg><use href="#i-folder"/></svg><span>Named Views</span></div></li>
                <li><svg class="twist"><use href="#i-closed"/></svg><div class="node"><svg><use href="#i-folder"/></svg><span>Selection Sets</span></div></li>
                <li><svg class="twist"><use href="#i-closed"/></svg><div class="node"><svg><use href="#i-eye-off"/></svg><svg><use href="#i-folder"/></svg><span>Origin</span></div></li>
                <li><svg class="twist"><use href="#i-closed"/></svg><div class="node"><svg><use href="#i-eye"/></svg><svg><use href="#i-folder"/></svg><span>Bodies</span></div></li>
                <li><svg class="twist"><use href="#i-closed"/></svg><div class="node"><svg><use href="#i-eye-off"/></svg><svg><use href="#i-folder"/></svg><span>Canvases</span></div></li>
                <li><svg class="twist"><use href="#i-closed"/></svg><div class="node"><svg><use href="#i-eye-off"/></svg><svg><use href="#i-folder"/></svg><span>Sketches</span></div></li>
                <li><svg class="twist"><use href="#i-closed"/></svg><div class="node"><svg><use href="#i-eye"/></svg><svg><use href="#i-folder"/></svg><span>Construction</span></div></li>
            </ul>
        </section>

        <div class="bottom-row">
            <section class="panel-head comments">
                <span class="collapse"></span>
                <span class="panel-title">COMMENTS</span>
                <button class="round" type="button" aria-label="Show comments"><svg viewBox="0 0 10 10"><circle cx="5" cy="5" r="4.500" fill="#222"/><path d="M2 5h6M5 2v6" stroke="#fff" stroke-width="1.500"/></svg></button>
                <span class="grip"></span>
            </section>
            <div class="navbar">
                <button type="button" class="has-menu" aria-label="Orbit"><svg><use href="#i-orbit"/></svg><span class="arrow"></span></button>
                <button type="button" aria-label="Look At"><svg><use href="#i-look"/></svg></button>
                <button type="button" aria-label="Pan"><svg><use href="#i-pan"/></svg></button>
                <button type="button" aria-label="Zoom"><svg><use href="#i-zoom"/></svg></button>
                <button type="button" class="has-menu" aria-label="Fit"><svg><use href="#i-fit"/></svg><span class="arrow"></span></button>
                <button type="button" class="has-menu" aria-label="Display Settings"><svg><use href="#i-display"/></svg><span class="arrow"></span></button>
                <button type="button" class="has-menu" aria-label="Grid and Snaps"><svg><use href="#i-grid"/></svg><span class="arrow"></span></button>
                <button type="button" class="has-menu" aria-label="Viewports"><svg><use href="#i-views"/></svg><span class="arrow"></span></button>
            </div>
        </div>
    </main>

    <!-- Timeline -->
    <footer class="timeline">
        <div class="scroll-thumb"></div>
        <div class="playback">
            <button type="button" aria-label="Go to start"><svg viewBox="0 0 14 14"><path d="M1 0h2v14H1zM13 0v14L4 7z"/></svg></button>
            <button type="button" aria-label="Step back"><svg viewBox="0 0 14 14"><path d="M10 1v12L1 7zM11 4h2v7h-2z"/></svg></button>
            <button type="button" aria-label="Play"><svg viewBox="0 0 14 14"><path d="M1 0l12 7-12 7z"/></svg></button>
            <button type="button" aria-label="Step forward"><svg viewBox="0 0 14 14"><path d="M4 1v12l9-6zM1 4h2v7H1z"/></svg></button>
            <button type="button" aria-label="Go to end"><svg viewBox="0 0 14 14"><path d="M11 0h2v14h-2zM1 0v14l9-7z"/></svg></button>
        </div>
        <div class="track">
            <div class="features" id="features"></div>
            <svg class="marker" viewBox="0 0 12 32"><path d="M0 0h12v5L7 11v21H5V11L0 5z" fill="#555"/></svg>
        </div>
        <button class="settings" type="button" aria-label="Timeline settings"><svg><use href="#i-gear"/></svg></button>
    </footer>
</div>
<script src="timeline.js"></script>
</body>
</html>
```
FILE: styles.css
```css
* {
    box-sizing: border-box;
}
body {
    margin: 0;
    background: #fff;
    color: #333;
    font-family: "Liberation Sans", Arial, sans-serif;
    font-size: 10px;
}
button {
    display: flex;
    align-items: center;
    justify-content: center;
    padding: 0;
    border: 0;
    background: none;
    color: inherit;
    font: inherit;
    cursor: pointer;
}
svg {
    display: block;
    flex: none;
}
.sprite {
    position: absolute;
    width: 0;
    height: 0;
}
.app {
    display: flex;
    flex-direction: column;
    min-height: 100vh;
}
.arrow {
    margin-left: 3px;
    border: 3px solid transparent;
    border-top: 5px solid #333;
    border-bottom: 0;
}
/* Toolbar */
.toolbar {
    display: flex;
    border-top: 1px solid #fff;
    border-bottom: 1px solid #d2d2d2;
    background: #f1f1f1;
}
.workspace {
    flex: none;
    width: 110px;
    margin: 8px 9px 9px 8px;
    border: 2px solid #dedede;
    border-radius: 4px;
    font-weight: bold;
}
.tabs {
    display: flex;
    gap: 22px;
    padding-left: 7px;
}
.tab {
    height: 22px;
    padding: 0 12px;
    border-bottom: 3px solid transparent;
    color: #333;
    line-height: 19px;
    text-decoration: none;
}
.tab.active {
    border-color: #1b93d2;
    color: #1b93d2;
}
.groups {
    display: flex;
    padding-top: 2px;
}
.group {
    padding: 0 5px;
    border-right: 1px solid #d6d6d6;
}
.group:first-child {
    padding: 0 4px 0 0;
}
.group:last-child {
    border-right: 0;
}
.group.wide {
    padding: 0 8px;
}
.tools {
    display: flex;
    justify-content: center;
}
.tools button {
    width: 43px;
    height: 34px;
}
.tools svg {
    width: 32px;
    height: 32px;
}
.group-name {
    width: 100%;
    height: 21px;
}
.group-name.inspect {
    padding: 0 7px;
}
/* Canvas */
.canvas {
    position: relative;
    flex: 1;
    display: flex;
    flex-direction: column;
    justify-content: space-between;
    padding: 4px 0;
}
.model {
    position: absolute;
    inset: 0;
    width: 100%;
    height: 100%;
}
.edge {
    stroke: #161616;
    stroke-width: 1.5;
    stroke-linejoin: round;
}
.thick {
    stroke-width: 2;
}
.tail-number {
    fill: #161616;
    stroke: #161616;
    stroke-width: 2;
    font-size: 25px;
    font-style: italic;
    font-weight: bold;
}
.view-cube {
    position: absolute;
    top: 9px;
    right: 9px;
    width: 110px;
}
.face-name {
    fill: #8f8f8f;
    font-size: 11px;
    font-weight: bold;
    text-anchor: middle;
}
.axis {
    font-size: 11px;
    font-weight: bold;
}
.axis-x { fill: #f79292; }
.axis-y { fill: #83ee83; }
.axis-z { fill: #9794f2; }
/* Browser panel */
.browser {
    position: relative;
    width: 300px;
}
.panel-head {
    display: flex;
    align-items: center;
    width: 300px;
    height: 25px;
    border: 1px solid #d0d0d0;
    border-left: 0;
    border-bottom-color: #aaa;
    background: #f1f1f1;
    color: #666;
}
.collapse {
    width: 25px;
    padding-left: 5px;
}
.collapse svg {
    width: 10px;
}
.panel-title {
    flex: 1;
}
.round svg {
    width: 10px;
}
.grip {
    width: 3px;
    height: 12px;
    margin: 0 1px 0 6px;
    border: 1px solid #999;
    border-width: 0 1px;
}
.tree {
    display: flex;
    flex-direction: column;
    gap: 4px;
    margin: 5px 0 0;
    padding: 0 0 0 36px;
    list-style: none;
    font-size: 11px;
}
.tree li {
    display: flex;
    align-items: center;
    gap: 9px;
}
.tree .root {
    gap: 7px;
    margin-left: -20px;
}
.twist {
    width: 10px;
    height: 14px;
}
.root .twist {
    width: 12px;
    height: 12px;
}
.node {
    display: flex;
    align-items: center;
    gap: 9px;
    height: 20px;
    padding: 0 10px 0 2px;
    background: #f1f1f1;
}
.node svg {
    width: 16px;
    height: 16px;
}
.node > span {
    margin-left: 5px;
}
.root .node {
    gap: 4px;
    padding: 0 8px 0 4px;
}
.root .node .selected {
    display: flex;
    align-items: center;
    gap: 16px;
    height: 16px;
    margin-left: 2px;
    padding: 0 11px 0 3px;
    background: #999;
    color: #fff;
    font-weight: bold;
}
.root .node .activate {
    width: 14px;
    height: 14px;
}
/* Comments and navigation bar */
.bottom-row {
    position: relative;
    display: grid;
    grid-template-columns: 1fr auto 1fr;
}
.comments {
    border-top-color: #f1f1f1;
}
.navbar {
    display: flex;
    align-items: center;
    gap: 9px;
    height: 25px;
    padding: 0 6px 0 1px;
    background: #f1f1f1;
}
.navbar svg {
    width: 17px;
    height: 17px;
}
.navbar .has-menu {
    margin-right: -3px;
}
/* Timeline */
.timeline {
    position: relative;
    display: flex;
    align-items: flex-start;
    height: 50px;
    border-top: 2px solid #c8c8c8;
    border-bottom: 1px solid #fff;
    background: #f1f1f1;
}
.scroll-thumb {
    position: absolute;
    top: 0;
    right: 4px;
    width: 298px;
    height: 6px;
    border-radius: 0 0 4px 4px;
    background: #c8c8c8;
}
.playback {
    display: flex;
    flex: none;
    gap: 11px;
    padding: 21px 0 0 6px;
}
.playback svg {
    width: 14px;
    height: 14px;
    fill: #444;
}
.track {
    display: flex;
    flex: none;
    margin: 9px 0 0 18px;
}
.features {
    display: flex;
    height: 32px;
    border-bottom: 2px solid #c8c8c8;
}
.features button {
    flex-direction: column;
    justify-content: flex-start;
    gap: 3px;
    width: 24px;
    padding-top: 6px;
}
.features button::after {
    content: "";
    width: 2px;
    height: 5px;
    background: #c8c8c8;
}
.features svg {
    width: 16px;
    height: 16px;
}
.marker {
    width: 12px;
    height: 32px;
    margin-left: -6px;
}
.settings {
    margin: 20px 11px 0 auto;
}
.settings svg {
    width: 16px;
    height: 16px;
}
```
FILE: timeline.js
```js
// one letter per feature, in the order they were created
const history = 'PSEPSLMMMPSSEEPSEMFCM' + 'MMPSESEFMCMSEMCMCMPSECMCMMM' + 'EBFSEMFCMFSECMCMCMFTECMT';

const featureTypes = {
    P: ['t-plane', 'Plane'],
    S: ['t-sketch', 'Sketch'],
    E: ['t-extrude', 'Extrude'],
    L: ['t-sweep', 'Sweep'],
    M: ['i-move', 'Move'],
    F: ['t-fillet', 'Fillet'],
    C: ['t-copy', 'Copy'],
    B: ['i-combine', 'Combine'],
    T: ['i-split', 'Split Body']
};

document.getElementById('features').innerHTML = [...history].map(function (key) {
    const [icon, name] = featureTypes[key];
    return `<button type="button" aria-label="${name}"><svg><use href="#${icon}"/></svg></button>`;
}).join('');
```
